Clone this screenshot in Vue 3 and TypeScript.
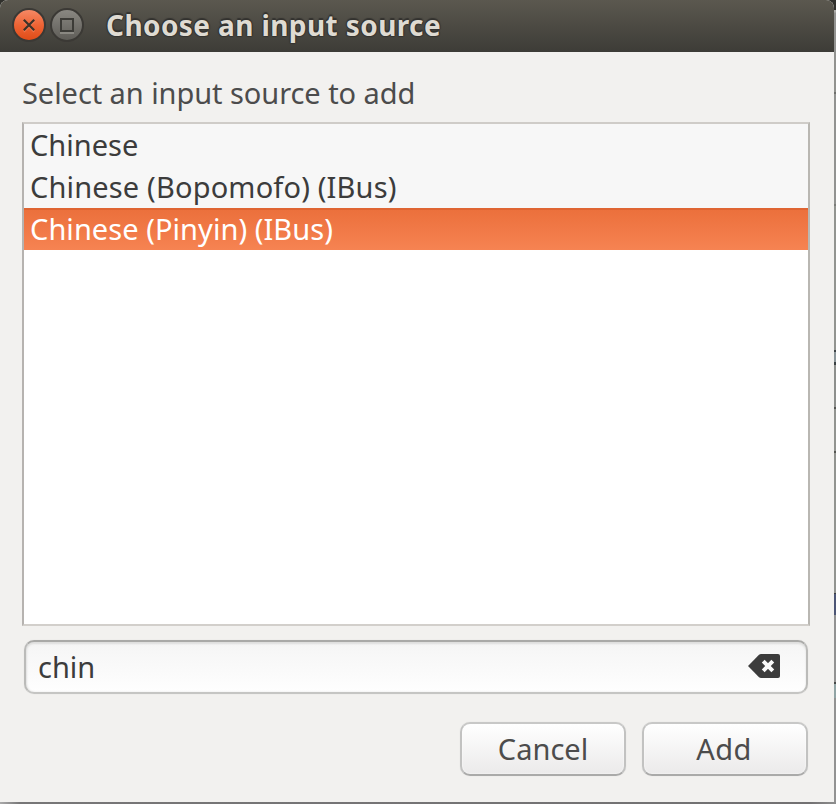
<script setup lang="ts">
import { ref } from 'vue'

interface Source { name: string; kind: string }

const sources: Source[] = [
  { name: 'Chinese', kind: 'plain' },
  { name: 'Chinese (Bopomofo) (IBus)', kind: 'bopomofo' },
  { name: 'Chinese (Pinyin) (IBus)', kind: 'pinyin' },
]
const selected = ref(2)
const query = ref('chin')
</script>

<template>
  <div class="desktop">
    <section class="dialog">
      <header class="titlebar">
        <svg class="controls" width="76" height="40" viewBox="0 0 76 40">
          <defs>
            <linearGradient id="close" x1="0" y1="0" x2="0" y2="1">
              <stop offset="0" stop-color="#f58b68" />
              <stop offset=".5" stop-color="#ee6435" />
              <stop offset="1" stop-color="#e04b16" />
            </linearGradient>
            <linearGradient id="max" x1="0" y1="0" x2="0" y2="1">
              <stop offset="0" stop-color="#8b8983" />
              <stop offset="1" stop-color="#5d5b56" />
            </linearGradient>
          </defs>
          <circle cx="19" cy="20" r="16" fill="url(#close)" stroke="#3b3935" stroke-width="2" />
          <path d="M13.8 15l10.4 10.4M24.2 15L13.8 25.4" transform="translate(0 1.3)" stroke="#f78d68" stroke-width="2" opacity=".55" />
          <path d="M13.8 14.8l10.4 10.4M24.2 14.8L13.8 25.2" stroke="#3c3229" stroke-width="2.2" />
          <circle cx="57" cy="20" r="16" fill="url(#max)" stroke="#3b3935" stroke-width="2" />
          <path d="M50 28h14" stroke="#8a8882" stroke-width="2" />
          <rect x="51" y="14" width="12" height="12" fill="none" stroke="#3c3b37" stroke-width="2" />
        </svg>
        <h1 class="title">Choose an input source</h1>
      </header>
      <main class="content">
        <p class="prompt">Select an input source to add</p>
        <ul class="list">
          <li
            v-for="(s, i) in sources"
            :key="s.name"
            class="row"
            :class="[s.kind, { selected: i === selected }]"
            @click="selected = i"
          >{{ s.name }}</li>
        </ul>
        <div class="entry">
          <span class="query">{{ query }}</span>
          <svg class="clear" width="32" height="24" viewBox="0 0 32 24" @click="query = ''">
            <path d="M0 12L11 .8Q12 0 13 0H30q2 0 2 2V22q0 2-2 2H13q-1 0-2-.8Z" fill="#3c3c3c" />
            <path d="M15.2 7.2l9.6 9.6M24.8 7.2l-9.6 9.6" stroke="#fafafa" stroke-width="4" />
          </svg>
        </div>
        <footer class="actions">
          <button class="button">Cancel</button>
          <button class="button add">Add</button>
        </footer>
      </main>
    </section>
    <div class="behind-right" />
    <div class="behind-bottom" />
  </div>
</template>

<style>
body { overflow: hidden; }
</style>

<style scoped>
.desktop {
  display: grid;
  grid-template-columns: 834px 2px;
  grid-template-rows: 802px 2px;
  width: 836px;
  height: 804px;
  background: #30302c;
  font-family: "Noto Sans", "Open Sans", sans-serif;
  font-size: 29px;
  color: #4c4c4c;
}
.dialog {
  display: flex;
  flex-direction: column;
  background: #f2f1ef;
  border-radius: 8px 8px 0 0;
  overflow: hidden;
}
.behind-right {
  background: linear-gradient(#30302c 0 10px, #aaa9a6 10px 12px, #929290 13px, #92938f 92px, #6f706d 92px 94px,
    #929391 94px 204px, #7b7c79 204px 206px, #929490 206px 350px, #3d4345 350px 352px, #8b9599 352px 362px,
    #3b4144 362px 365px, #8e908d 365px 407px, #555652 407px 409px, #929490 409px 451px, #555652 451px 453px,
    #929490 453px 593px, #3c3d40 593px 594px, #4c5575 594px 615px, #929292 615px 682px, #484848 682px 684px,
    #91a4a5 684px 698px, #929292 698px);
}
.behind-bottom {
  grid-column: 1 / 3;
  background: linear-gradient(90deg, #aaa 0, #777677 20px, #727172 810px, #8e8e8e 836px);
}
.titlebar {
  display: flex;
  align-items: center;
  box-sizing: border-box;
  height: 52px;
  padding: 0 0 2px 10px;
  background: linear-gradient(#5b584f, #3d3c37);
}
.controls { flex: none; }
.title {
  margin: 0 0 0 20px;
  font-size: 28px;
  font-weight: 700;
  line-height: 40px;
  letter-spacing: 0.4px;
  color: #dfdbd2;
  text-shadow: 0 -2px 1px #33322f, 0 1px 1px #33322f, 1px 0 1px #33322f, -1px 0 1px #33322f;
  white-space: nowrap;
}
.content {
  display: flex;
  flex-direction: column;
  padding: 20px 24px 26px 22px;
}
.prompt {
  margin: 0 0 8px;
  height: 42px;
  line-height: 42px;
  letter-spacing: -0.06px;
  white-space: nowrap;
}
.list {
  box-sizing: border-box;
  height: 504px;
  margin: 0;
  padding: 0;
  list-style: none;
  border: 2px solid;
  border-color: #cfccc8 #b9b7b2 #d2cfcb #b6b3b0;
  background: #fff;
}
.row {
  height: 42px;
  padding-left: 6px;
  line-height: 42px;
  color: #3c3c3c;
  background: #f7f7f7;
  white-space: nowrap;
}
.bopomofo { letter-spacing: 0.16px; }
.pinyin { letter-spacing: 0.05px; }
.selected {
  color: #fff;
  background: linear-gradient(#eb6f3b, #f68352);
  box-shadow: inset 0 2px #df6533;
}
.entry {
  display: flex;
  align-items: center;
  justify-content: space-between;
  box-sizing: border-box;
  width: 784px;
  height: 54px;
  margin: 14px 0 0 2px;
  padding: 0 26px 2px 12px;
  border: 2px solid;
  border-color: #a9a9a7 #bbbbb9 #c5c5c3;
  border-radius: 10px;
  background: linear-gradient(#f5f5f5, #fefefe);
  box-shadow: inset 0 2px 2px #dededd, inset 1px 0 2px #e4e4e3, 0 0 1px #d6d5d3;
  color: #3c3c3c;
}
.actions {
  display: flex;
  justify-content: flex-end;
  gap: 16px;
  margin: 28px 2px 0 0;
}
.button {
  box-sizing: border-box;
  width: 166px;
  height: 54px;
  padding: 0 0 1px;
  border: 2px solid;
  border-color: #c8c8c7 #c2c2c1 #aaaaa9;
  border-radius: 10px;
  background: linear-gradient(#fff, #ebeaea);
  box-shadow: inset 0 0 2px #fff, 0 0 1px #d2d1cf;
  color: #4c4c4c;
  font: inherit;
  line-height: 40px;
}
.add {
  padding-right: 2px;
  letter-spacing: 0.4px;
}
</style>
